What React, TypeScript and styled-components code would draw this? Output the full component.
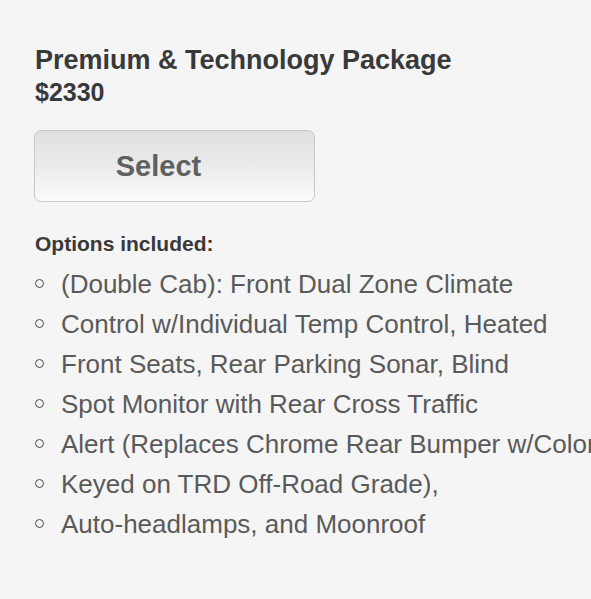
import React from "react";
import styled, { createGlobalStyle } from "styled-components";

const Global = createGlobalStyle`
  html, body {
    margin: 0;
    padding: 0;
    background: #f5f5f5;
    overflow: hidden;
  }
  body {
    font-family: "Liberation Sans", Arial, Helvetica, sans-serif;
  }
`;

const Page = styled.div`
  width: 591px;
  height: 599px;
  box-sizing: border-box;
  padding: 44px 0 0 35px;
  background: #f5f5f5;
  overflow: hidden;
`;

const Title = styled.h1`
  margin: 0;
  font-size: 27px;
  line-height: 32px;
  font-weight: 700;
  color: #393939;
  white-space: nowrap;
`;

const Price = styled.div`
  margin-top: 1px;
  font-size: 25px;
  line-height: 30px;
  font-weight: 700;
  color: #393939;
`;

const SelectButton = styled.button`
  display: flex;
  align-items: center;
  justify-content: center;
  box-sizing: border-box;
  margin: 23px 0 0 -1px;
  width: 281px;
  height: 72px;
  padding: 0 32px 0 0;
  border: 1.5px solid #c9c9c9;
  border-radius: 7px;
  background: linear-gradient(to bottom, #e0e0e0 0%, #ececec 55%, #fbfbfb 100%);
  font-family: inherit;
  font-size: 29px;
  font-weight: 700;
  color: #606060;
  cursor: pointer;
`;

const OptionsLabel = styled.div`
  margin-top: 29px;
  font-size: 21px;
  line-height: 26px;
  font-weight: 700;
  color: #393939;
`;

const OptionList = styled.ul`
  margin: 7px 0 0 0;
  padding: 0;
  list-style: none;
`;

const OptionItem = styled.li`
  display: flex;
  align-items: center;
  gap: 17px;
  height: 40px;
  font-size: 26px;
  line-height: 40px;
  color: #5a5a5a;
  white-space: nowrap;
`;

const Bullet = styled.span`
  flex: none;
  box-sizing: border-box;
  width: 9px;
  height: 9px;
  margin-left: 0px;
  margin-bottom: 1px;
  border: 1.6px solid #4a4a4a;
  border-radius: 50%;
`;

const options = [
  "(Double Cab): Front Dual Zone Climate",
  "Control w/Individual Temp Control, Heated",
  "Front Seats, Rear Parking Sonar, Blind",
  "Spot Monitor with Rear Cross Traffic",
  "Alert (Replaces Chrome Rear Bumper w/Color",
  "Keyed on TRD Off-Road Grade),",
  "Auto-headlamps, and Moonroof",
];

export default function App() {
  return (
    <>
      <Global />
      <Page>
        <Title>Premium &amp; Technology Package</Title>
        <Price>$2330</Price>
        <SelectButton>Select</SelectButton>
        <OptionsLabel>Options included:</OptionsLabel>
        <OptionList>
          {options.map((o) => (
            <OptionItem key={o}>
              <Bullet />
              {o}
            </OptionItem>
          ))}
        </OptionList>
      </Page>
    </>
  );
}
